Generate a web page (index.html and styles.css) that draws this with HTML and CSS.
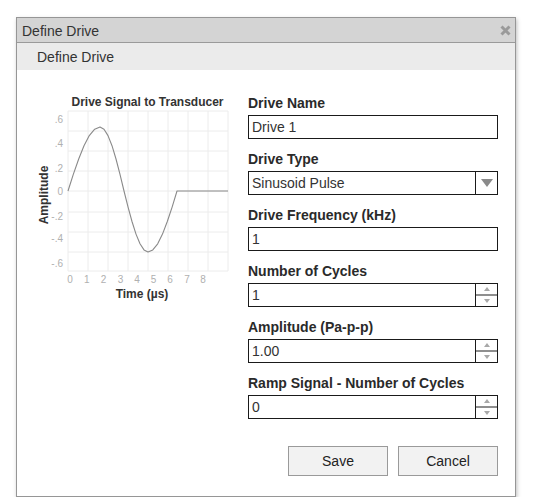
FILE: index.html
```html
<!DOCTYPE html>
<html>
<head>
<meta charset="utf-8">
<link rel="stylesheet" href="styles.css">
</head>
<body>
<div class="dialog">
  <div class="titlebar">
    <span class="title">Define Drive</span>
    <svg class="close" width="11" height="11" viewBox="0 0 11 11"><path d="M1.5 1.5 L9.5 9.5 M9.5 1.5 L1.5 9.5" stroke="#9a9a9a" stroke-width="3" stroke-linecap="butt"/></svg>
  </div>
  <div class="subheader">Define Drive</div>
  <div class="content">
    <svg class="chart" width="228" height="215" viewBox="0 0 228 215">
      <g stroke="#ececec" stroke-width="1">
        <line x1="48" y1="21" x2="48" y2="181"/>
        <line x1="68" y1="21" x2="68" y2="181"/>
        <line x1="88" y1="21" x2="88" y2="181"/>
        <line x1="108" y1="21" x2="108" y2="181"/>
        <line x1="128" y1="21" x2="128" y2="181"/>
        <line x1="148" y1="21" x2="148" y2="181"/>
        <line x1="168" y1="21" x2="168" y2="181"/>
        <line x1="188" y1="21" x2="188" y2="181"/>
        <line x1="208" y1="21" x2="208" y2="181"/>
        <line x1="48" y1="21" x2="208" y2="21"/>
        <line x1="48" y1="41" x2="208" y2="41"/>
        <line x1="48" y1="61" x2="208" y2="61"/>
        <line x1="48" y1="81" x2="208" y2="81"/>
        <line x1="48" y1="101" x2="208" y2="101"/>
        <line x1="48" y1="122" x2="208" y2="122"/>
        <line x1="48" y1="142" x2="208" y2="142"/>
        <line x1="48" y1="162" x2="208" y2="162"/>
        <line x1="48" y1="181" x2="208" y2="181"/>
      </g>
      <polyline fill="none" stroke="#8a8a8a" stroke-width="1.1" stroke-linejoin="round"
        points="48,101 53.3,84.4 58.7,69 64,55.7 69.3,45.6 74.7,39.2 80,37 84,39.2 88,45.6 92,55.7 96,69 100,84.4 104,101 108,116.8 112,131.5 116,144.1 120,153.8 124,159.9 128,162 132.8,159.9 137.7,153.8 142.5,144.1 147.3,131.5 152.2,116.8 157,101 208,101"/>
      <text class="ctitle" x="127.5" y="16" text-anchor="middle">Drive Signal to Transducer</text>
      <g class="ylab" text-anchor="end">
        <text x="43" y="32.5">.6</text>
        <text x="43" y="56.5">.4</text>
        <text x="43" y="81.5">.2</text>
        <text x="43" y="104.5">0</text>
        <text x="43" y="129.5">-.2</text>
        <text x="43" y="151.5">-.4</text>
        <text x="43" y="176.5">-.6</text>
      </g>
      <g class="ylab" text-anchor="middle">
        <text x="50" y="192.5">0</text>
        <text x="66.7" y="192.5">1</text>
        <text x="83.5" y="192.5">2</text>
        <text x="100.5" y="192.5">3</text>
        <text x="117" y="192.5">4</text>
        <text x="133.5" y="192.5">5</text>
        <text x="150" y="192.5">6</text>
        <text x="167" y="192.5">7</text>
        <text x="183" y="192.5">8</text>
      </g>
      <text class="ctitle" x="122" y="208" text-anchor="middle">Time (µs)</text>
      <text class="ctitle" x="0" y="0" text-anchor="middle" transform="translate(27.5 105) rotate(-90)">Amplitude</text>
    </svg>
    <div class="form">
      <div class="group">
        <div class="label">Drive Name</div>
        <div class="field"><span class="val">Drive 1</span></div>
      </div>
      <div class="group">
        <div class="label">Drive Type</div>
        <div class="field"><span class="val">Sinusoid Pulse</span><span class="selbtn"><span class="tri-down"></span></span></div>
      </div>
      <div class="group">
        <div class="label">Drive Frequency (kHz)</div>
        <div class="field"><span class="val">1</span></div>
      </div>
      <div class="group">
        <div class="label">Number of Cycles</div>
        <div class="field"><span class="val">1</span><span class="spin"><span class="half"><span class="up"></span></span><span class="half bot"><span class="dn"></span></span></span></div>
      </div>
      <div class="group">
        <div class="label">Amplitude (Pa-p-p)</div>
        <div class="field"><span class="val">1.00</span><span class="spin"><span class="half"><span class="up"></span></span><span class="half bot"><span class="dn"></span></span></span></div>
      </div>
      <div class="group">
        <div class="label">Ramp Signal - Number of Cycles</div>
        <div class="field"><span class="val">0</span><span class="spin"><span class="half"><span class="up"></span></span><span class="half bot"><span class="dn"></span></span></span></div>
      </div>
      <div class="buttons">
        <button class="btn">Save</button>
        <button class="btn">Cancel</button>
      </div>
    </div>
  </div>
</div>
</body>
</html>
```

FILE: styles.css
```css
* { box-sizing: border-box; }
html, body { margin: 0; background: #fff; }
body {
  padding: 17px 0 0 16px;
  font-family: "Liberation Sans", Arial, sans-serif;
  color: #222;
}
.dialog {
  width: 500px;
  height: 480px;
  border: 1px solid #969696;
  background: #fff;
  box-shadow: 1px 2px 4px rgba(0,0,0,0.25);
}
.titlebar {
  height: 25px;
  background: #d4d4d4;
  border-bottom: 1px solid #9a9a9a;
  display: flex;
  align-items: center;
  justify-content: space-between;
  padding: 2px 4px 0 5px;
  font-size: 14px;
  color: #333;
}
.title { line-height: 20px; }
.close { display: block; margin-top: -1px; }
.subheader {
  height: 27px;
  background: #ebebeb;
  padding: 1px 0 0 20px;
  font-size: 14px;
  line-height: 26px;
  color: #333;
}
.content {
  display: flex;
  padding: 20px 0 0 3px;
}
.chart { display: block; flex: none; }
.ctitle {
  font-family: "Liberation Sans", Arial, sans-serif;
  font-size: 12px;
  font-weight: bold;
  fill: #333;
}
.ylab text {
  font-family: "Liberation Sans", Arial, sans-serif;
  font-size: 10px;
  fill: #b0b0b0;
}
.form {
  width: 250px;
  margin-top: 5px;
  display: flex;
  flex-direction: column;
}
.group { margin-bottom: 12px; }
.label {
  font-size: 14px;
  font-weight: bold;
  line-height: 16px;
  margin-bottom: 4px;
  color: #2a2a2a;
}
.field {
  height: 24px;
  border: 1px solid #1a1a1a;
  display: flex;
  align-items: stretch;
  font-size: 14px;
}
.val {
  flex: 1;
  line-height: 22px;
  padding-left: 3px;
  color: #333;
}
.selbtn {
  width: 22px;
  border-left: 1px solid #1a1a1a;
  display: flex;
  align-items: center;
  justify-content: center;
}
.tri-down {
  width: 0; height: 0;
  border-left: 6px solid transparent;
  border-right: 6px solid transparent;
  border-top: 8px solid #8a8a8a;
  margin-left: 1px;
}
.spin {
  width: 22px;
  border-left: 1px solid #1a1a1a;
  display: flex;
  flex-direction: column;
}
.half {
  flex: 1;
  display: flex;
  align-items: center;
  justify-content: center;
}
.half.bot { border-top: 2px solid #8f8f8f; }
.up {
  width: 0; height: 0;
  border-left: 3px solid transparent;
  border-right: 3px solid transparent;
  border-bottom: 4px solid #a8a8a8;
}
.dn {
  width: 0; height: 0;
  border-left: 3px solid transparent;
  border-right: 3px solid transparent;
  border-top: 4px solid #a8a8a8;
}
.buttons {
  display: flex;
  justify-content: flex-end;
  gap: 10px;
  margin-top: 15px;
}
.btn {
  width: 100px;
  height: 30px;
  border: 1px solid #9a9a9a;
  background: #f2f2f2;
  font-family: "Liberation Sans", Arial, sans-serif;
  font-size: 14px;
  color: #222;
  padding: 0;
  border-radius: 0;
}
```
